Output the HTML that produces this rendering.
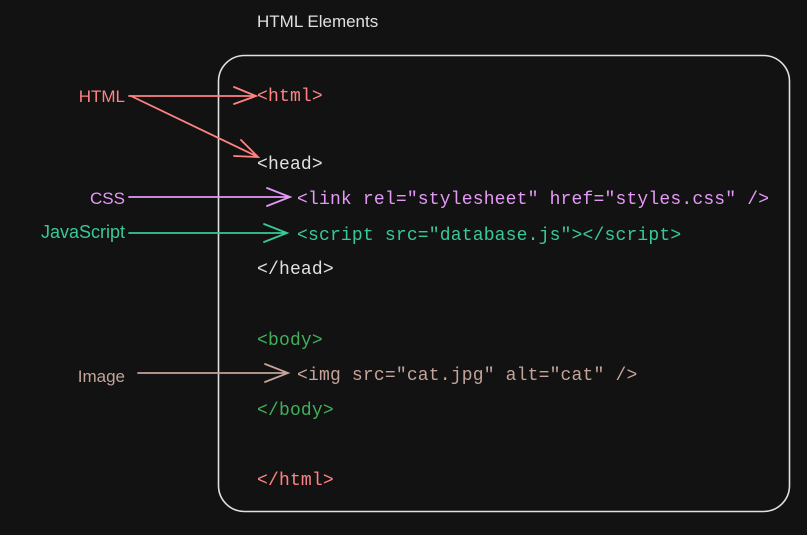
<!DOCTYPE html>
<html><head><style>body{margin:0;background:#121212;width:807px;height:535px;overflow:hidden}</style></head>
<body>
<svg width="807" height="535" xmlns="http://www.w3.org/2000/svg" style="display:block">
<rect width="807" height="535" fill="#121212"/>
<rect x="218.5" y="55.5" width="571" height="456" rx="26" fill="none" stroke="#e0e0e0" stroke-width="1.6"/>
<text x="257" y="27" fill="#e0e0e0" font-size="17" font-family="'Liberation Sans', sans-serif">HTML Elements</text>
<g font-family="'Liberation Sans', sans-serif" font-size="17" text-anchor="end">
<text x="125" y="102" fill="#ff8383">HTML</text>
<text x="125" y="204" fill="#e599f7">CSS</text>
<text x="125" y="238" fill="#38c996" font-size="18">JavaScript</text>
<text x="125" y="382" fill="#c4a39a">Image</text>
</g>
<g font-family="'Liberation Mono', monospace" font-size="18" letter-spacing="0.18">
<text x="257" y="101" fill="#ff8383">&lt;html&gt;</text>
<text x="257" y="169" fill="#e0e0e0">&lt;head&gt;</text>
<text x="297" y="204" fill="#e599f7">&lt;link rel="stylesheet" href="styles.css" /&gt;</text>
<text x="297" y="240" fill="#38c996">&lt;script src="database.js"&gt;&lt;/script&gt;</text>
<text x="257" y="274" fill="#e0e0e0">&lt;/head&gt;</text>
<text x="257" y="345" fill="#40b05a">&lt;body&gt;</text>
<text x="297" y="380" fill="#c4a39a">&lt;img src="cat.jpg" alt="cat" /&gt;</text>
<text x="257" y="415" fill="#40b05a">&lt;/body&gt;</text>
<text x="257" y="485" fill="#ff8383">&lt;/html&gt;</text>
</g>
<g fill="none" stroke-width="1.8" stroke-linecap="round">
<path d="M129 96 L256 96 M234 87 L256 96 L234 104" stroke="#ff8383"/>
<path d="M131 96 L258 157 M241 140 L258 157 L234 156" stroke="#ff8383"/>
<path d="M129 197 L290 197 M267 188 L290 197 L267 206" stroke="#e599f7"/>
<path d="M129 233 L287 233 M264 224 L287 233 L264 242" stroke="#38c996"/>
<path d="M138 373 L288 373 M265 364 L288 373 L265 382" stroke="#c4a39a"/>
</g>
</svg>
</body></html>
